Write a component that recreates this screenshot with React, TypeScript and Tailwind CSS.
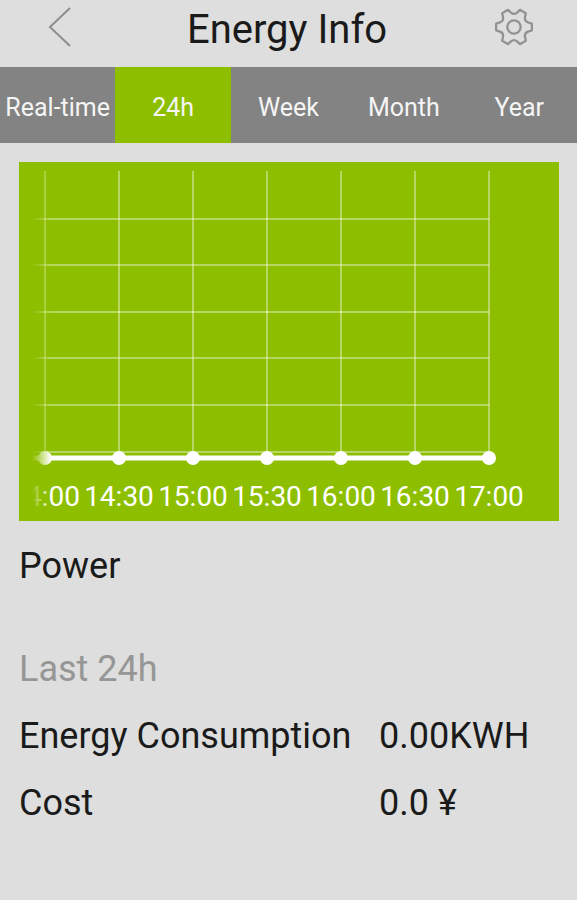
import React, { useState } from "react";
import clsx from "clsx";

const tabs = ["Real-time", "24h", "Week", "Month", "Year"];

const readings = [
  { x: 26, label: "14:00" },
  { x: 100, label: "14:30" },
  { x: 174, label: "15:00" },
  { x: 248, label: "15:30" },
  { x: 322, label: "16:00" },
  { x: 396, label: "16:30" },
  { x: 470, label: "17:00" },
];

const gridRows = [57, 103, 150, 196, 243, 290];
const baseline = 296;

const polar = (r: number, deg: number) => {
  const a = (deg * Math.PI) / 180;
  return `${(r * Math.cos(a)).toFixed(2)} ${(r * Math.sin(a)).toFixed(2)}`;
};

// six teeth with a curved notch between each pair
const gearPath =
  [0, 60, 120, 180, 240, 300]
    .map((t, i) =>
      [
        `${i === 0 ? "M" : "L"}${polar(19, t - 11)}`,
        `Q${polar(19, t)} ${polar(19, t + 11)}`,
        `L${polar(15.5, t + 18)}`,
        `Q${polar(12.5, t + 30)} ${polar(15.5, t + 42)}`,
      ].join(" ")
    )
    .join(" ") + "Z";

const GearIcon = () => (
  <svg
    viewBox="-21 -21 42 42"
    className="size-[42px]"
    fill="none"
    stroke="#929292"
    strokeWidth="2.4"
    strokeLinejoin="round"
    aria-hidden="true"
  >
    <path d={gearPath} />
    <circle r="7" />
  </svg>
);

const BackIcon = () => (
  <svg
    viewBox="0 0 24 40"
    className="h-10 w-6"
    fill="none"
    stroke="#8e8e8e"
    strokeWidth="2"
    aria-hidden="true"
  >
    <path d="M22 1 L2 20 L22 39" />
  </svg>
);

const PowerChart = () => (
  <svg
    viewBox="0 0 540 359"
    className="block h-auto w-full bg-[#8dbf00]"
    role="img"
    aria-label="Power over the last 24 hours"
  >
    <defs>
      <linearGradient id="edge-fade">
        <stop offset="0" stopColor="#8dbf00" />
        <stop offset="1" stopColor="#8dbf00" stopOpacity="0" />
      </linearGradient>
    </defs>
    <g stroke="#ffffff" strokeOpacity="0.5" strokeWidth="1.5">
      {gridRows.map((y) => (
        <line key={y} x1="12" x2="470" y1={y} y2={y} />
      ))}
      {readings.map(({ x }) => (
        <line key={x} x1={x} x2={x} y1="9" y2={baseline} />
      ))}
    </g>
    <line x1="12" x2="470" y1={baseline} y2={baseline} stroke="#ffffff" strokeWidth="5" />
    {readings.map(({ x, label }) => (
      <g key={label} fill="#ffffff">
        <circle cx={x} cy={baseline} r="7" />
        <text x={x} y="344" fontSize="28" textAnchor="middle">
          {label}
        </text>
      </g>
    ))}
    <rect x="0" y="0" width="13" height="359" fill="#8dbf00" />
    <rect x="13" y="0" width="19" height="359" fill="url(#edge-fade)" />
  </svg>
);

const App = () => {
  const [active, setActive] = useState("24h");

  return (
    <div className="min-h-screen bg-[#dddedd] font-['Roboto',sans-serif] text-[#1a1a1a]">
      <header className="flex h-[67px] items-start justify-between pt-[7px] pr-[43px] pl-10">
        <button type="button" aria-label="Back" className="flex size-10 items-center justify-center">
          <BackIcon />
        </button>
        <h1 className="text-[40px] leading-[46px]">Energy Info</h1>
        <button type="button" aria-label="Settings" className="flex size-10 items-center justify-center">
          <GearIcon />
        </button>
      </header>

      <nav className="grid grid-cols-5 bg-[#838383]">
        {tabs.map((tab) => (
          <button
            key={tab}
            type="button"
            onClick={() => setActive(tab)}
            aria-pressed={active === tab}
            className={clsx(
              "h-[76px] pt-1.5 text-center text-[25px] whitespace-nowrap text-[#f5f5f5]",
              active === tab && "bg-[#8dbf00]"
            )}
          >
            {tab}
          </button>
        ))}
      </nav>

      <main className="pt-[19px] pr-[18px] pl-[19px] text-[36px] leading-[67px]">
        <PowerChart />
        <h2 className="mt-3">Power</h2>

        <h2 className="mt-9 text-[#969696]">Last 24h</h2>
        <dl className="grid grid-cols-3">
          <dt className="col-span-2">Energy Consumption</dt>
          <dd>0.00KWH</dd>
          <dt className="col-span-2">Cost</dt>
          <dd>0.0 ¥</dd>
        </dl>
      </main>
    </div>
  );
};

export default App;
